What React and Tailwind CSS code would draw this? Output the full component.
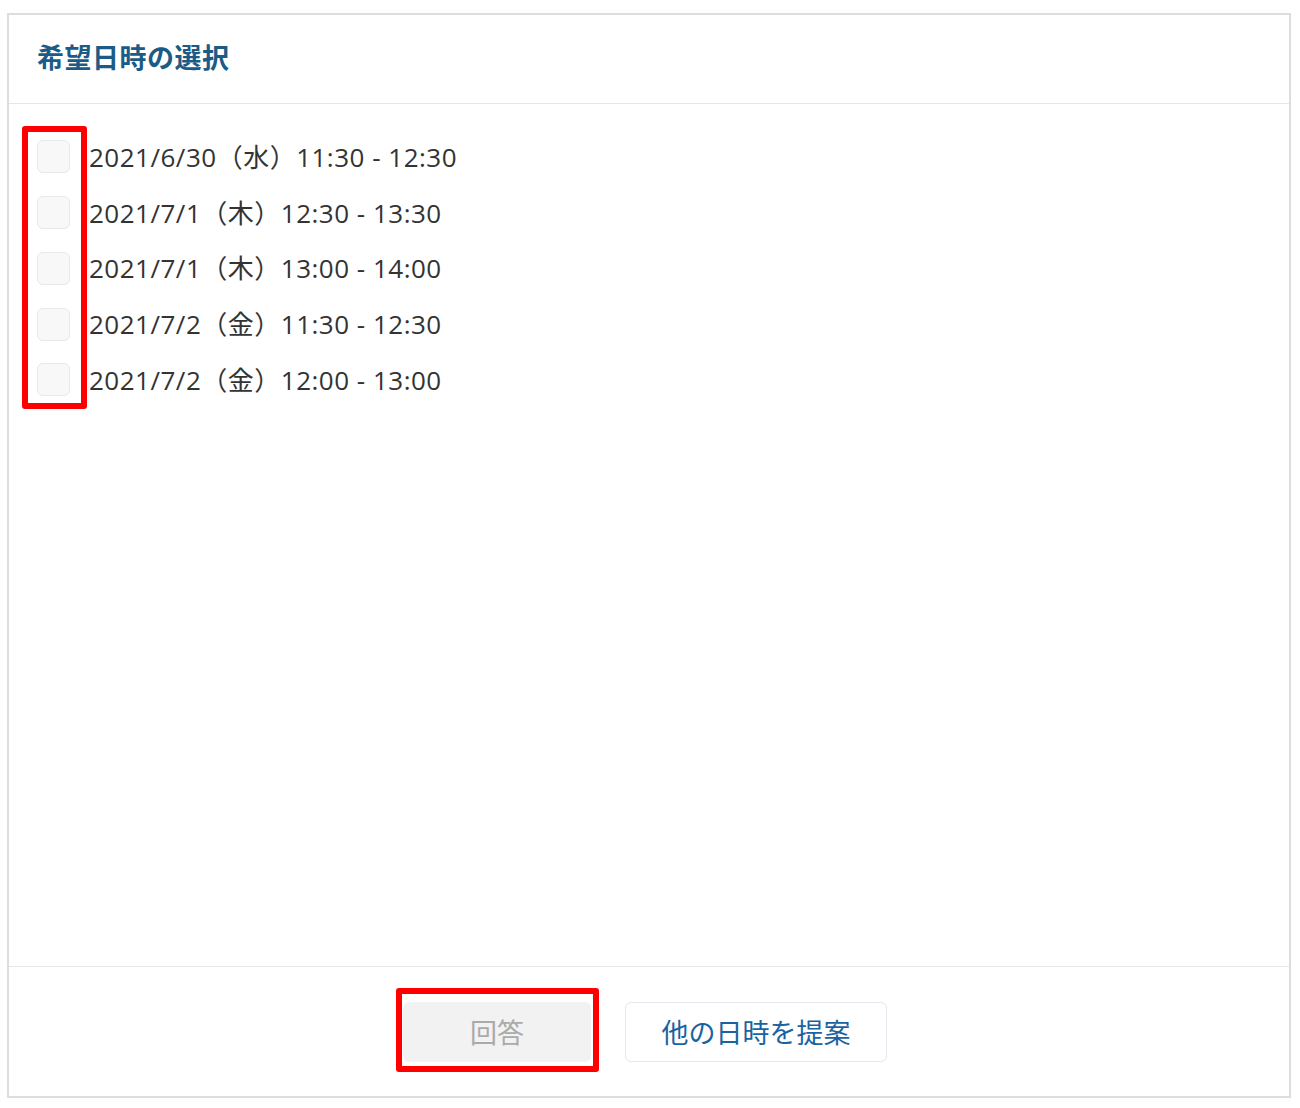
const slots = [
  "2021/6/30（水）11:30 - 12:30",
  "2021/7/1（木）12:30 - 13:30",
  "2021/7/1（木）13:00 - 14:00",
  "2021/7/2（金）11:30 - 12:30",
  "2021/7/2（金）12:00 - 13:00",
];

const font = { fontFamily: '"Noto Sans CJK JP", "Noto Sans", sans-serif' };
const rowFont = { fontFamily: '"Open Sans", "Noto Sans CJK JP", sans-serif' };

export default function App() {
  return (
    <div className="bg-white w-[1300px] h-[1108px] pt-[13px] pl-[7px]" style={font}>
      <div className="w-[1284px] h-[1085px] border-2 border-[#dddddd] flex flex-col">
        {/* header */}
        <div className="h-[89px] shrink-0 flex items-center pl-[28px] pb-[5px] border-b border-[#e6e6e6]">
          <h2 className="text-[27px] font-bold text-[#1b5b86] leading-none tracking-[0.5px]">希望日時の選択</h2>
        </div>

        {/* options */}
        <div className="flex-1 pt-[25px] pl-[28px]">
          <div className="relative flex flex-col w-fit">
            {slots.map((s) => (
              <label key={s} className="h-[55.75px] flex items-center gap-[19px] cursor-pointer">
                <span className="w-[33px] h-[33px] rounded-[6px] bg-[#f8f8f8] border border-[#e9e9e9] shrink-0" />
                <span className="text-[26px] tracking-[0.5px] text-[#333333] leading-none" style={rowFont}>{s}</span>
              </label>
            ))}
            <div className="absolute left-[-15px] top-[-3px] w-[65px] h-[283px] border-[6px] border-[#ff0000] rounded-[3px] pointer-events-none" />
          </div>
        </div>

        {/* footer */}
        <div className="h-[130px] shrink-0 border-t border-[#e6e6e6] flex items-center justify-center gap-[34px] pr-[8px]">
          <div className="relative">
            <button className="w-[188px] h-[60px] rounded-[6px] bg-[#f2f2f2] text-[#aaaaaa] text-[27px] leading-none" disabled>
              回答
            </button>
            <div className="absolute left-[-7px] top-[-14px] w-[203px] h-[84px] border-[6px] border-[#ff0000] rounded-[3px] pointer-events-none" />
          </div>
          <button className="w-[262px] h-[60px] rounded-[6px] bg-white border border-[#e3e8ee] text-[#1b62a0] text-[27px] leading-none">
            他の日時を提案
          </button>
        </div>
      </div>
    </div>
  );
}
